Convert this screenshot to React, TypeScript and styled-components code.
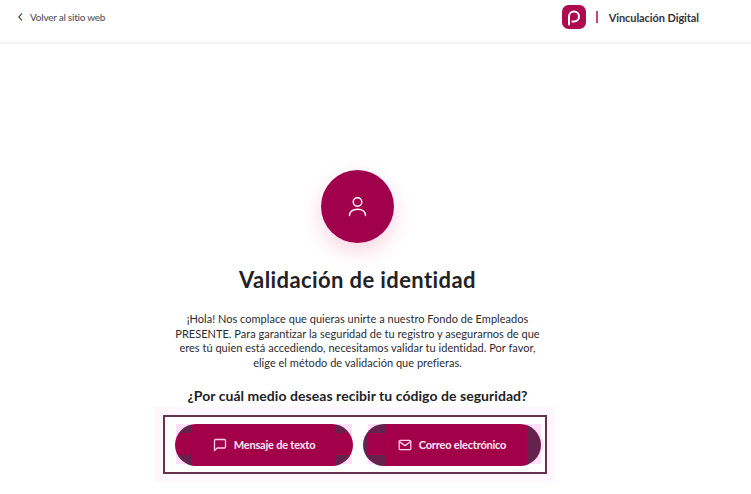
import React from "react";
import styled, { createGlobalStyle } from "styled-components";

const Global = createGlobalStyle`
  html, body { margin: 0; padding: 0; background: #fff; }
  body { font-family: "Lato", "Open Sans", sans-serif; color: #222; }
  * { box-sizing: border-box; }
`;

const Page = styled.div`
  width: 751px;
  height: 494px;
  overflow: hidden;
  display: flex;
  flex-direction: column;
`;

const Header = styled.header`
  height: 44px;
  flex: none;
  display: flex;
  align-items: center;
  justify-content: space-between;
  padding: 0 52px 8px 17px;
  border-bottom: 2px solid #f3f3f3;
`;

const BackLink = styled.a`
  display: flex;
  align-items: center;
  gap: 6px;
  font-size: 10px;
  font-weight: 500;
  letter-spacing: -0.25px;
  color: #55555a;
`;

const Brand = styled.div`
  display: flex;
  align-items: center;
`;

const Logo = styled.svg`
  width: 24px;
  height: 24px;
  display: block;
`;

const Divider = styled.span`
  width: 2px;
  height: 12px;
  background: #c2477e;
  margin: 0 11px 0 10px;
`;

const BrandName = styled.span`
  font-size: 11px;
  font-weight: 700;
  letter-spacing: -0.08px;
  color: #33333a;
`;

const Main = styled.main`
  flex: 1;
  display: flex;
  flex-direction: column;
  align-items: center;
  padding: 126px 36px 0 0;
`;

const Avatar = styled.div`
  width: 73px;
  height: 73px;
  border-radius: 50%;
  flex: none;
  background: #a0004c;
  display: flex;
  align-items: center;
  justify-content: center;
  box-shadow: 0 8px 20px rgba(226, 40, 110, 0.2);
`;

const Title = styled.h1`
  margin: 22px 0 0;
  font-size: 22px;
  line-height: 30px;
  font-weight: 700;
  letter-spacing: 0.4px;
  color: #222226;
`;

const Intro = styled.p`
  margin: 17px 0 0;
  width: 400px;
  text-align: center;
  font-size: 11px;
  line-height: 14.67px;
  letter-spacing: 0.02px;
  font-weight: 400;
  color: #2c2c30;
`;

const Question = styled.h2`
  margin: 15px 0 0;
  font-size: 14px;
  line-height: 20px;
  font-weight: 700;
  letter-spacing: 0.05px;
  color: #222226;
`;

const Choices = styled.div`
  margin: 9px 0 0 -5px;
  width: 384px;
  height: 59px;
  flex: none;
  display: flex;
  gap: 10px;
  padding: 7px 4px 6px 10px;
  border: 2px solid #66304f;
  box-shadow: 0 0 0 8px #fff6fe;
`;

const Halo = styled.div<{ $variant: "text" | "mail" }>`
  width: 178px;
  height: 42px;
  flex: none;
  background-image: linear-gradient(#fddff9, #fddff9);
  background-repeat: no-repeat;
  background-size: ${(p) => (p.$variant === "text" ? "176px 40px" : "173px 40px")};
  background-position: ${(p) => (p.$variant === "text" ? "1px 0" : "5px 0")};
`;

const ChoiceButton = styled.button<{ $variant: "text" | "mail" }>`
  width: 100%;
  height: 100%;
  padding: 0;
  border: none;
  border-radius: 21px;
  display: flex;
  align-items: center;
  justify-content: center;
  gap: 7px;
  font-family: inherit;
  font-size: 11px;
  font-weight: 700;
  letter-spacing: -0.2px;
  color: #ffe6f6;
  background-color: #66214d;
  background-repeat: no-repeat;
  background-image: linear-gradient(#a3004a, #a3004a), linear-gradient(#a3004a, #a3004a);
  background-size: ${(p) =>
    p.$variant === "text" ? "144px 100%, 100% 22px" : "142px 100%, 159px 22px"};
  background-position: ${(p) =>
    p.$variant === "text" ? "17px 0, 0 9px" : "22px 0, 5px 9px"};
  box-shadow: ${(p) => (p.$variant === "mail" ? "12px 0 0 -9px #fddff9" : "none")};
`;

const ButtonIcon = styled.svg`
  width: 14px;
  height: 14px;
  flex: none;
  fill: none;
  stroke: #ffd0ea;
  stroke-width: 1.3;
  stroke-linecap: round;
  stroke-linejoin: round;
`;

export default function App() {
  return (
    <Page>
      <Global />
      <Header>
        <BackLink>
          <svg width="7" height="10" viewBox="0 0 7 10" fill="none" stroke="#55555a" strokeWidth="1.2">
            <path d="M5 1.5 1.8 5 5 8.5" />
          </svg>
          Volver al sitio web
        </BackLink>
        <Brand>
          <Logo viewBox="0 0 24 24">
            <rect width="24" height="24" rx="6.5" fill="#ad0a50" />
            <path
              d="M7 19.5V11.6a5 5 0 1 1 5 5H10.4"
              fill="none"
              stroke="#fff"
              strokeWidth="2"
              strokeLinecap="round"
            />
          </Logo>
          <Divider />
          <BrandName>Vinculación Digital</BrandName>
        </Brand>
      </Header>
      <Main>
        <Avatar>
          <svg width="19" height="21" viewBox="0 0 19 21" fill="none" stroke="#fff" strokeWidth="1.4" strokeLinecap="round">
            <circle cx="9.5" cy="6" r="4.3" />
            <path d="M1.5 19.5c0-4 3.3-6.3 8-6.3s8 2.3 8 6.3" />
          </svg>
        </Avatar>
        <Title>Validación de identidad</Title>
        <Intro>
          ¡Hola! Nos complace que quieras unirte a nuestro Fondo de Empleados
          <br />
          PRESENTE. Para garantizar la seguridad de tu registro y asegurarnos de que
          <br />
          eres tú quien está accediendo, necesitamos validar tu identidad. Por favor,
          <br />
          elige el método de validación que prefieras.
        </Intro>
        <Question>¿Por cuál medio deseas recibir tu código de seguridad?</Question>
        <Choices>
          <Halo $variant="text">
            <ChoiceButton $variant="text">
              <ButtonIcon viewBox="0 0 14 14">
                <path d="M1.5 2.6c0-.6.5-1.1 1.1-1.1h8.8c.6 0 1.1.5 1.1 1.1v6.3c0 .6-.5 1.1-1.1 1.1H4.2L1.5 12.6z" />
              </ButtonIcon>
              Mensaje de texto
            </ChoiceButton>
          </Halo>
          <Halo $variant="mail">
            <ChoiceButton $variant="mail">
              <ButtonIcon viewBox="0 0 14 14">
                <rect x="1.2" y="2.4" width="11.6" height="9.2" rx="1.2" />
                <path d="M1.4 3.6 7 7.6l5.6-4" />
              </ButtonIcon>
              Correo electrónico
            </ChoiceButton>
          </Halo>
        </Choices>
      </Main>
    </Page>
  );
}
